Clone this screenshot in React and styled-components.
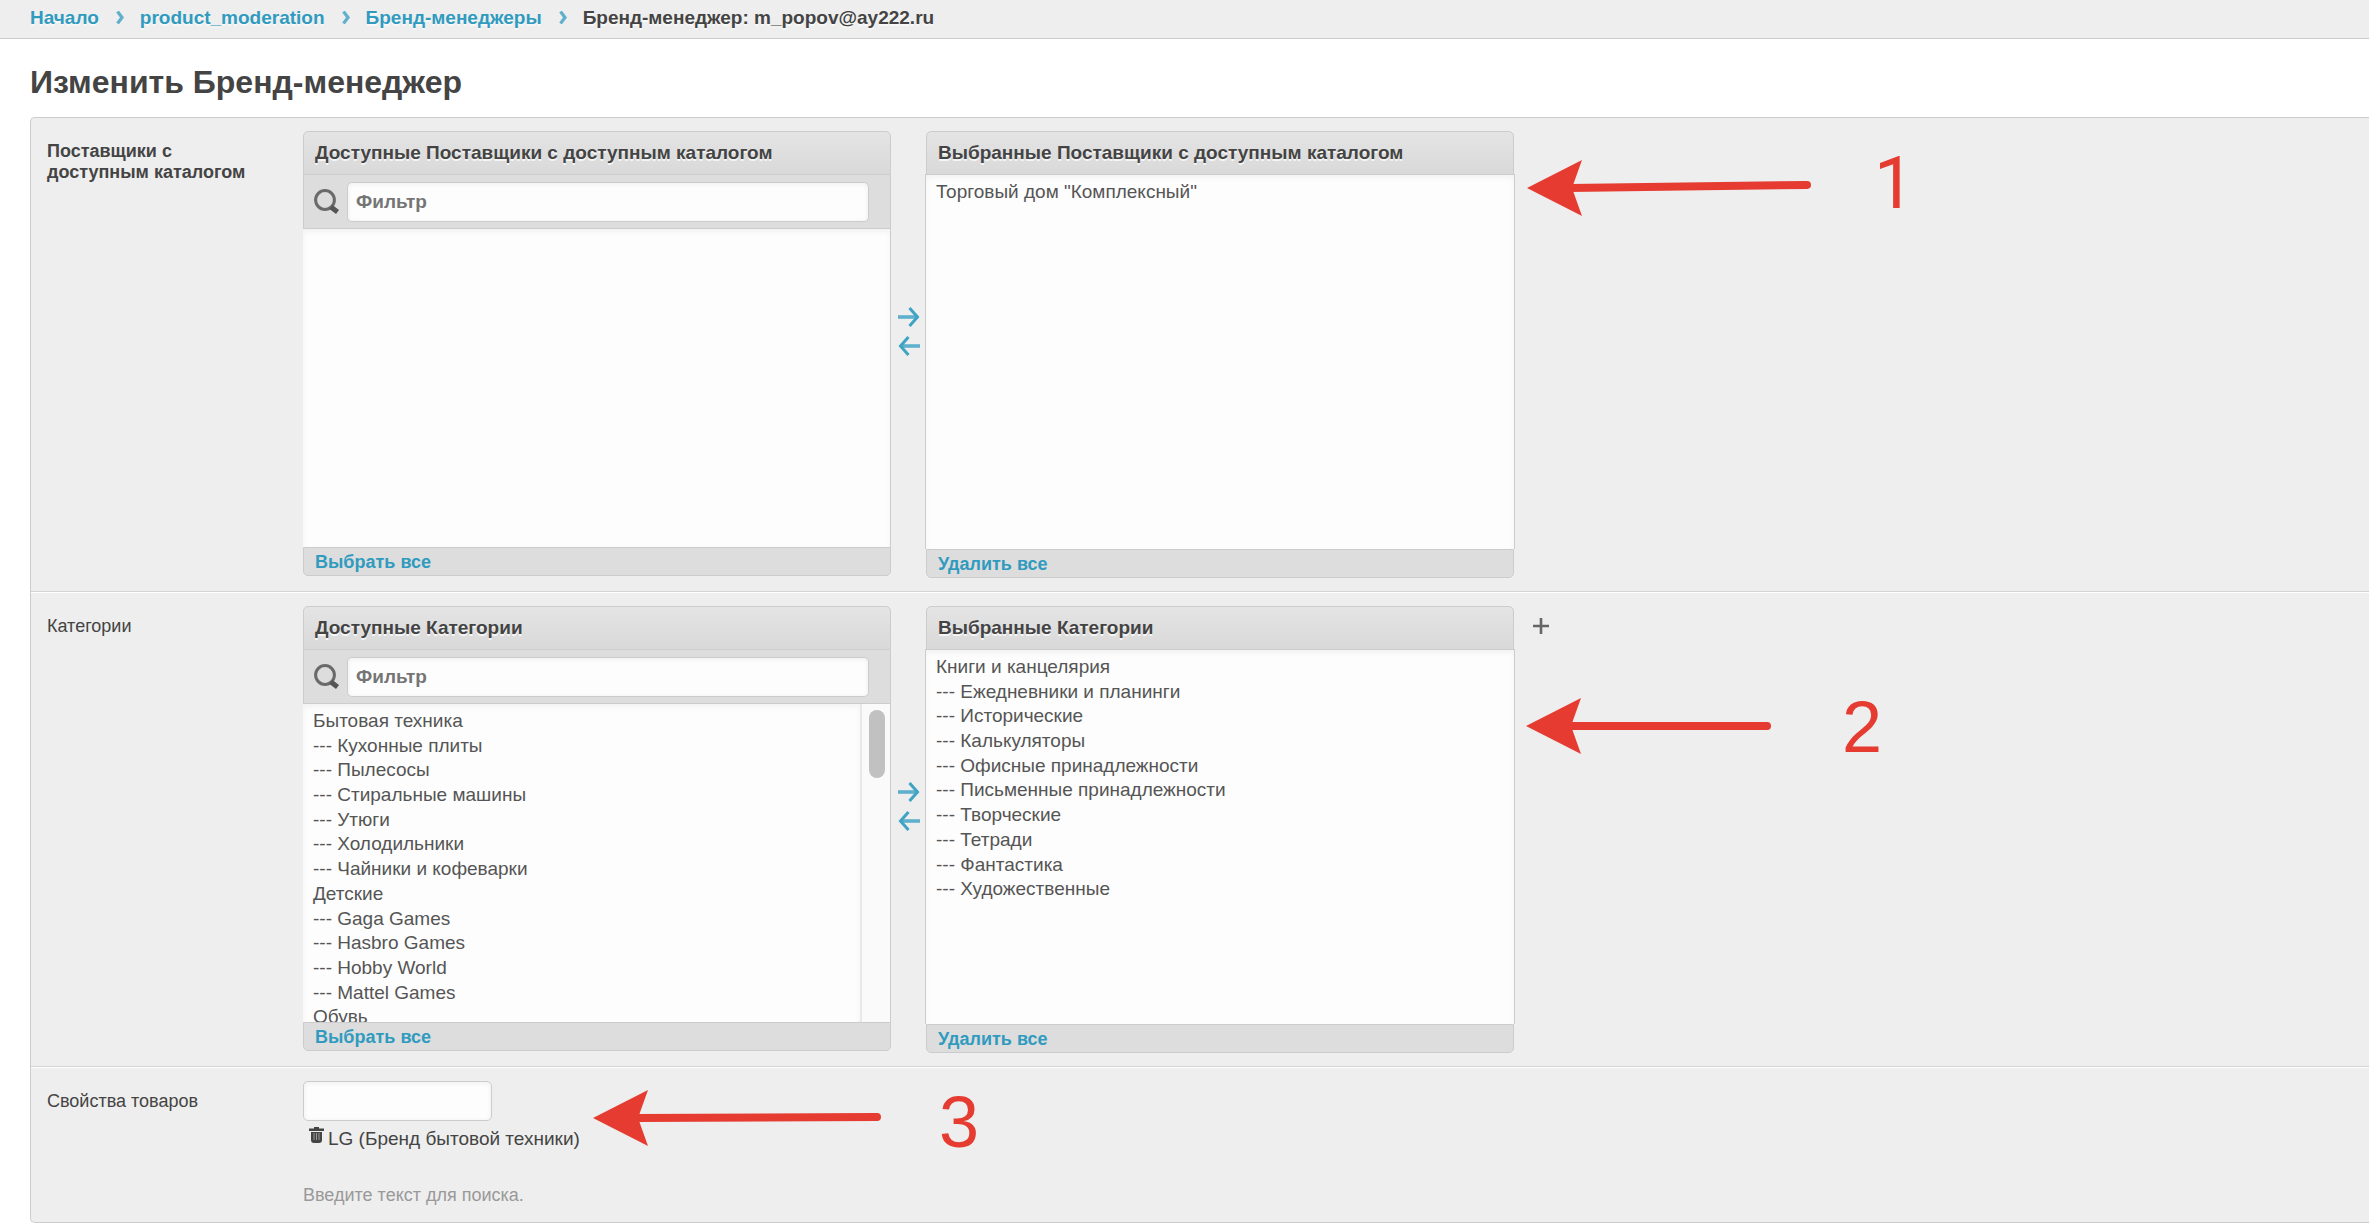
import React from 'react';
import styled, { createGlobalStyle } from 'styled-components';

const GlobalStyle = createGlobalStyle`
  * { box-sizing: border-box; }
  body {
    margin: 0;
    background: #fff;
    color: #444;
    font-family: "Liberation Sans", Arial, sans-serif;
    font-size: 19px;
    overflow-x: hidden;
  }
`;

const Breadcrumbs = styled.nav`
  height: 39px;
  padding: 0 30px 3px;
  display: flex;
  align-items: center;
  background: #eee;
  border-bottom: 1px solid #ccc;
  font-weight: bold;
  line-height: 22px;
  text-shadow: 0 2px 0 #f8f8f8;
`;

const Crumb = styled.a`
  color: #309bbf;
  text-decoration: none;
`;

const CrumbArrow = styled.svg`
  width: 10px;
  height: 13px;
  margin: 0 15px 0 16px;
`;

const Title = styled.h1`
  margin: 26px 30px 17px;
  font-size: 32px;
  line-height: 35px;
`;

const Panel = styled.form`
  margin: 0 0 8px 30px;
  background: #eee;
  border: 1px solid #ccc;
  border-right: 0;
  border-radius: 5px 0 0 5px;
`;

const Row = styled.section`
  position: relative;
  display: flex;
  align-items: flex-start;
  padding: 13px 0 ${(p) => (p.$last ? 17 : 13)}px 16px;
  border-top: ${(p) => (p.$first ? 0 : 1)}px solid #fff;
  border-bottom: ${(p) => (p.$last ? 0 : 1)}px solid #d4d4d4;
`;

const RowLabel = styled.label`
  flex: 0 0 256px;
  padding: 10px 40px 0 0;
  font-size: 18px;
  line-height: 21px;
  font-weight: ${(p) => (p.$bold ? 'bold' : 'normal')};
`;

const Selector = styled.div`
  flex: 0 0 588px;
`;

const SelectorTitle = styled.h2`
  height: 44px;
  margin: 0;
  padding: 0 11px;
  border: 1px solid #ccc;
  border-radius: 5px 5px 0 0;
  background: linear-gradient(#e4e4e4, #d9d9d9);
  font-size: 19px;
  line-height: 42px;
  text-shadow: 0 2px 0 #f5f5f5;
`;

const FilterBar = styled.label`
  height: 54px;
  display: flex;
  align-items: center;
  gap: 8px;
  padding: 0 21px 0 10px;
  background: #ddd;
  border: 1px solid #ccc;
  border-top: 0;
`;

const SearchIcon = styled.svg`
  flex: none;
  width: 25px;
  height: 25px;
`;

const TextBox = styled.input`
  height: 40px;
  padding: 0 8px;
  border: 1px solid #ccc;
  border-radius: 5px;
  background: #fdfdfd;
  box-shadow: inset 0 1px 5px #eee;
  color: #444;
  font: bold 19px "Liberation Sans", Arial, sans-serif;
  &::placeholder { color: #757575; opacity: 1; }
`;

const FilterBox = styled(TextBox)`
  flex: 1;
  min-width: 0;
`;

const SearchBox = styled(TextBox)`
  display: block;
  width: 189px;
`;

const ListFrame = styled.div`
  display: flex;
  height: ${(p) => (p.$chosen ? 375 : 318)}px;
  margin: ${(p) => (p.$chosen ? '-1px -1px 0' : 0)};
  border: 1px solid #ccc;
  border-width: ${(p) => (p.$chosen ? '1px 1px 0' : '0 1px 0 0')};
  background: #fdfdfd;
`;

const List = styled.select`
  flex: 1;
  min-width: 0;
  margin: 0;
  padding: 6px 8px 0;
  overflow: hidden;
  border: 0;
  border-radius: 0;
  outline: 0;
  background: transparent;
  box-shadow: inset 0 3px 5px #f2f2f2;
  font: 19px "Liberation Sans", Arial, sans-serif;
  color: #555;
`;

const Item = styled.option`
  min-height: 1.3em;
  padding: 0 2px;
  color: #555;
`;

const ScrollTrack = styled.div`
  flex: 0 0 30px;
  padding: 6px 5px 0 7px;
  border-left: 2px solid #e8e8e8;
  background: #fafafa;
`;

const ScrollThumb = styled.div`
  width: 16px;
  height: 68px;
  border-radius: 8px;
  background: #c1c1c1;
`;

const SelectorFooter = styled.footer`
  height: 29px;
  padding: 0 11px;
  display: flex;
  align-items: center;
  background: #ddd;
  border: 1px solid #ccc;
  border-radius: 0 0 5px 5px;
`;

const FooterLink = styled.a`
  color: #309bbf;
  font-size: 18px;
  line-height: 20px;
  font-weight: bold;
  text-decoration: none;
`;

const Chooser = styled.div`
  flex: 0 0 35px;
  display: flex;
  flex-direction: column;
  align-items: center;
  gap: 9px;
  padding-top: 176px;
`;

const IconButton = styled.button`
  display: flex;
  padding: 0;
  border: 0;
  background: none;
  cursor: pointer;
`;

const AddButton = styled(IconButton)`
  margin: 12px 0 0 19px;
`;

const Properties = styled.div`
  display: flex;
  flex-direction: column;
`;

const Property = styled.div`
  display: flex;
  align-items: flex-start;
  gap: 4px;
  padding: 6px 0 0 6px;
  line-height: 24px;
`;

const Help = styled.p`
  margin: 34px 0 0;
  color: #999;
  font-size: 18px;
  line-height: 20px;
`;

const PointerArrow = styled.svg`
  position: absolute;
  left: ${(p) => p.$left}px;
  top: ${(p) => p.$top}px;
  pointer-events: none;
`;

const StepNumber = styled.span`
  position: absolute;
  left: ${(p) => p.$left}px;
  top: ${(p) => p.$top}px;
  color: #e63b30;
  font-family: ${(p) => p.$font || '"Liberation Sans"'}, Arial, sans-serif;
  font-size: 72px;
  line-height: 72px;
  pointer-events: none;
`;

const ArrowIcon = ({ back }) => (
  <svg width="22" height="20" viewBox="0 0 22 20" fill="none" aria-hidden="true">
    <path d={back ? 'M22 10H2' : 'M0 10H20'} stroke="#5fb0cd" strokeWidth="3.6" />
    <path d={back ? 'M10.5 1L2.5 10L10.5 19' : 'M11.5 1L19.5 10L11.5 19'} stroke="#3fa3c4" strokeWidth="3" />
  </svg>
);

const Magnifier = () => (
  <SearchIcon viewBox="0 0 25 25" fill="none" aria-hidden="true">
    <circle cx="11" cy="11" r="9.4" stroke="#6a6a6a" strokeWidth="3" />
    <path d="M17 18L23.5 23" stroke="#555" strokeWidth="5" />
  </SearchIcon>
);

const Separator = () => (
  <CrumbArrow viewBox="0 0 10 13" fill="none" aria-hidden="true">
    <path d="M2.5 0.5L7 6.5L2.5 12.5" stroke="#5fb0cd" strokeWidth="3.2" />
  </CrumbArrow>
);

const Pointer = ({ left, top, length, rise }) => (
  <PointerArrow $left={left} $top={top} width={length} height="56" viewBox={`0 0 ${length} 56`} aria-hidden="true">
    <path d="M0 28L55 0L45 28L55 56Z" fill="#e63b30" />
    <path d={`M42 28L${length - 4} ${28 - rise}`} stroke="#e63b30" strokeWidth="8" strokeLinecap="round" />
  </PointerArrow>
);

function Available({ id, title, items, scroll }) {
  return (
    <Selector>
      <SelectorTitle>{title}</SelectorTitle>
      <FilterBar>
        <Magnifier />
        <FilterBox type="text" placeholder="Фильтр" aria-label="Фильтр" />
      </FilterBar>
      <ListFrame>
        <List id={id} multiple size={12} aria-label={title}>
          {items.map((t) => <Item key={t}>{t}</Item>)}
        </List>
        {scroll && <ScrollTrack><ScrollThumb /></ScrollTrack>}
      </ListFrame>
      <SelectorFooter><FooterLink href="#all">Выбрать все</FooterLink></SelectorFooter>
    </Selector>
  );
}

function Chosen({ title, items }) {
  return (
    <Selector>
      <SelectorTitle>{title}</SelectorTitle>
      <ListFrame $chosen>
        <List multiple size={14} aria-label={title}>
          {items.map((t) => <Item key={t}>{t}</Item>)}
        </List>
      </ListFrame>
      <SelectorFooter><FooterLink href="#none">Удалить все</FooterLink></SelectorFooter>
    </Selector>
  );
}

const Transfer = () => (
  <Chooser>
    <IconButton type="button" aria-label="Выбрать"><ArrowIcon /></IconButton>
    <IconButton type="button" aria-label="Удалить"><ArrowIcon back /></IconButton>
  </Chooser>
);

const availableCategories = [
  'Бытовая техника', '--- Кухонные плиты', '--- Пылесосы', '--- Стиральные машины',
  '--- Утюги', '--- Холодильники', '--- Чайники и кофеварки', 'Детские',
  '--- Gaga Games', '--- Hasbro Games', '--- Hobby World', '--- Mattel Games', 'Обувь',
];

const chosenCategories = [
  'Книги и канцелярия', '--- Ежедневники и планинги', '--- Исторические',
  '--- Калькуляторы', '--- Офисные принадлежности', '--- Письменные принадлежности',
  '--- Творческие', '--- Тетради', '--- Фантастика', '--- Художественные',
];

export default function App() {
  return (
    <>
      <GlobalStyle />
      <Breadcrumbs>
        <Crumb href="#home">Начало</Crumb>
        <Separator />
        <Crumb href="#app">product_moderation</Crumb>
        <Separator />
        <Crumb href="#managers">Бренд-менеджеры</Crumb>
        <Separator />
        <span>Бренд-менеджер: m_popov@ay222.ru</span>
      </Breadcrumbs>
      <main>
        <Title>Изменить Бренд-менеджер</Title>
        <Panel>
          <Row $first>
            <RowLabel $bold htmlFor="suppliers">Поставщики с доступным каталогом</RowLabel>
            <Available id="suppliers" title="Доступные Поставщики с доступным каталогом" items={[]} />
            <Transfer />
            <Chosen title="Выбранные Поставщики с доступным каталогом" items={['Торговый дом "Комплексный"']} />
            <Pointer left={1496} top={42} length={284} rise={3} />
            <StepNumber $left={1843} $top={30} $font="Roboto">1</StepNumber>
          </Row>
          <Row>
            <RowLabel htmlFor="categories">Категории</RowLabel>
            <Available id="categories" title="Доступные Категории" items={availableCategories} scroll />
            <Transfer />
            <Chosen title="Выбранные Категории" items={chosenCategories} />
            <AddButton type="button" aria-label="Добавить">
              <svg width="16" height="16" viewBox="0 0 16 16" aria-hidden="true">
                <path d="M8 0V16M0 8H16" stroke="#666" strokeWidth="2.6" />
              </svg>
            </AddButton>
            <Pointer left={1495} top={105} length={245} rise={0} />
            <StepNumber $left={1811} $top={98}>2</StepNumber>
          </Row>
          <Row $last>
            <RowLabel htmlFor="properties">Свойства товаров</RowLabel>
            <Properties>
              <SearchBox id="properties" type="text" />
              <Property>
                <IconButton type="button" aria-label="Удалить LG">
                  <svg width="15" height="16" viewBox="0 0 15 16" aria-hidden="true">
                    <path d="M0 1.5H5V0H10V1.5H15V4H0Z" fill="#444" />
                    <path d="M2 5H13V13Q13 16 10 16H5Q2 16 2 13Z" fill="#444" />
                    <path d="M5 6V13M7.5 6V13M10 6V13" stroke="#999" strokeWidth="1" />
                  </svg>
                </IconButton>
                <span>LG (Бренд бытовой техники)</span>
              </Property>
              <Help>Введите текст для поиска.</Help>
            </Properties>
            <Pointer left={562} top={22} length={288} rise={1} />
            <StepNumber $left={908} $top={18}>3</StepNumber>
          </Row>
        </Panel>
      </main>
    </>
  );
}
